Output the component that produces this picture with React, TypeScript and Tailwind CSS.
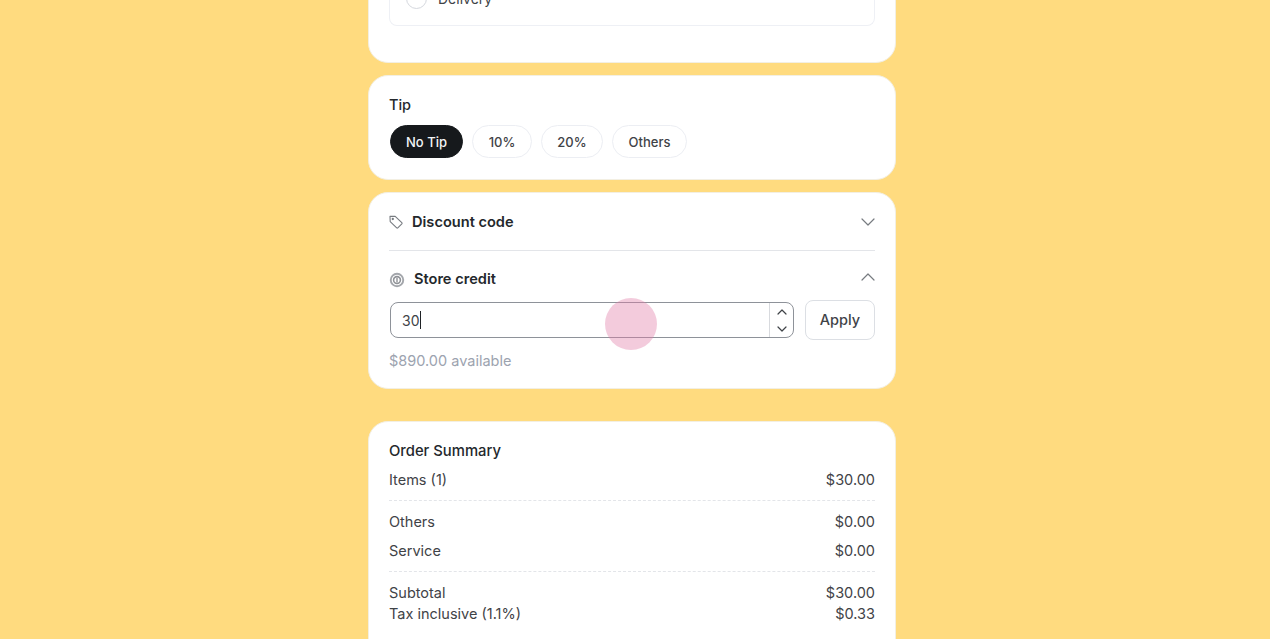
import React from "react";

const Row = ({ label, value, cls = "" }: { label: string; value: string; cls?: string }) => (
  <div className={`flex justify-between text-[14.5px] leading-[21px] text-[#3f4347] ${cls}`}>
    <span>{label}</span>
    <span>{value}</span>
  </div>
);

const Chip = ({ label, active, w }: { label: string; active?: boolean; w: string }) => (
  <div
    className={`flex h-[33px] items-center justify-center rounded-full border pt-[2px] text-[13px] font-medium ${w} ${
      active ? "border-[#16191c] bg-[#16191c] text-[#f3f4f6]" : "border-[#eceef3] bg-white text-[#3f4347]"
    }`}
  >
    {label}
  </div>
);

export default function App() {
  return (
    <div className="relative h-[639px] w-[1270px] overflow-hidden bg-[#ffdb7f] font-['Inter',sans-serif]">
      <div className="ml-[368px] flex w-[528px] flex-col">
        <div className="mt-[-30px] h-[93px] rounded-[20px] border border-[#f3efe2] bg-white px-5">
          <div className="flex h-[55px] items-center gap-[11px] rounded-b-[8px] border border-t-0 border-[#eef0f5] pl-4">
            <div className="h-[21px] w-[21px] rounded-full border border-[#d5d8de]" />
            <span className="text-[14px] text-[#3f4347]">Delivery</span>
          </div>
        </div>

        <div className="mt-[12px] h-[105px] rounded-[20px] border border-[#f3efe2] bg-white px-5 pt-[18px]">
          <div className="text-[14.5px] font-medium leading-[21px] text-[#24282c]">Tip</div>
          <div className="ml-px mt-[10px] flex gap-[9px]">
            <Chip label="No Tip" active w="w-[73px]" />
            <Chip label="10%" w="w-[60px]" />
            <Chip label="20%" w="w-[62px]" />
            <Chip label="Others" w="w-[75px]" />
          </div>
        </div>

        <div className="mt-[12px] h-[197px] rounded-[20px] border border-[#f3efe2] bg-white px-5">
          <div className="flex h-[58px] items-center justify-between border-b border-[#e3e5e9] pt-px">
            <div className="flex items-center gap-[9px]">
              <svg width="14" height="14" viewBox="0 0 14 14" fill="none" stroke="#777b80" strokeWidth="1.1" strokeLinejoin="round">
                <path d="M1 1.4h5.2l6.6 6.3a.8.8 0 0 1 0 1.1l-4 4a.8.8 0 0 1-1.1 0L1.2 6.6z" />
                <circle cx="3.8" cy="4" r=".6" />
              </svg>
              <span className="text-[14.6px] font-semibold leading-[21px] text-[#24282c]">Discount code</span>
            </div>
            <svg width="14" height="8" viewBox="0 0 14 8" fill="none" stroke="#777b80" strokeWidth="1.2" strokeLinecap="round" strokeLinejoin="round">
              <path d="M1 1l6 6 6-6" />
            </svg>
          </div>

          <div className="flex h-[49px] items-center justify-between pt-[8px]">
            <div className="flex items-center gap-[9px]">
              <svg width="16" height="16" viewBox="0 0 16 16" fill="none">
                <circle cx="8" cy="8" r="7.2" fill="#a3a6ab" />
                <circle cx="8" cy="8" r="5.3" fill="#fff" />
                <circle cx="8" cy="8" r="4.2" fill="#8f9297" />
                <circle cx="8" cy="8" r="2.6" fill="#fff" />
                <rect x="7.4" y="5.8" width="1.2" height="4.4" fill="#7d8085" />
              </svg>
              <span className="text-[14.6px] font-semibold leading-[21px] text-[#24282c]">Store credit</span>
            </div>
            <svg className="mb-[5px]" width="14" height="8" viewBox="0 0 14 8" fill="none" stroke="#777b80" strokeWidth="1.2" strokeLinecap="round" strokeLinejoin="round">
              <path d="M1 7l6-6 6 6" />
            </svg>
          </div>

          <div className="flex items-center justify-between">
            <div className="ml-px flex h-[36px] w-[404px] items-stretch rounded-[8px] border border-[#8e9299] bg-white">
              <div className="flex flex-1 items-center pl-[11px] text-[14px] text-[#3f4347]">
                <span>30</span>
                <span className="ml-px h-[18px] w-px bg-[#1f2226]" />
              </div>
              <div className="flex w-[24px] flex-col items-center justify-center gap-[11px] border-l border-[#d8dade]">
                <svg width="10" height="6" viewBox="0 0 10 6" fill="none" stroke="#3f4347" strokeWidth="1.2" strokeLinecap="round" strokeLinejoin="round">
                  <path d="M1 5l4-4 4 4" />
                </svg>
                <svg width="10" height="6" viewBox="0 0 10 6" fill="none" stroke="#3f4347" strokeWidth="1.2" strokeLinecap="round" strokeLinejoin="round">
                  <path d="M1 1l4 4 4-4" />
                </svg>
              </div>
            </div>
            <div className="flex h-[40px] w-[70px] items-center justify-center rounded-[8px] border border-[#dcdfe4] bg-white text-[14.5px] font-medium text-[#3f4347]">
              Apply
            </div>
          </div>

          <div className="mt-[10px] text-[14.5px] leading-[21px] text-[#9ca3af]">$890.00 available</div>
        </div>

        <div className="mt-[32px] h-[260px] rounded-[20px] border border-[#f3efe2] bg-white px-5 pt-[19px]">
          <div className="text-[14.8px] font-medium leading-[21px] text-[#24282c]">Order Summary</div>
          <Row label="Items (1)" value="$30.00" cls="mt-[7px]" />
          <div className="mb-[10px] mt-[10px] border-t border-dashed border-[#e3e5e9]" />
          <Row label="Others" value="$0.00" />
          <Row label="Service" value="$0.00" cls="mt-[8px]" />
          <div className="mb-[10px] mt-[10px] border-t border-dashed border-[#e3e5e9]" />
          <Row label="Subtotal" value="$30.00" />
          <Row label="Tax inclusive (1.1%)" value="$0.33" />
        </div>
      </div>

      <div className="absolute left-[605px] top-[298px] h-[52px] w-[52px] rounded-full bg-[#e17da7]/40" />
    </div>
  );
}
